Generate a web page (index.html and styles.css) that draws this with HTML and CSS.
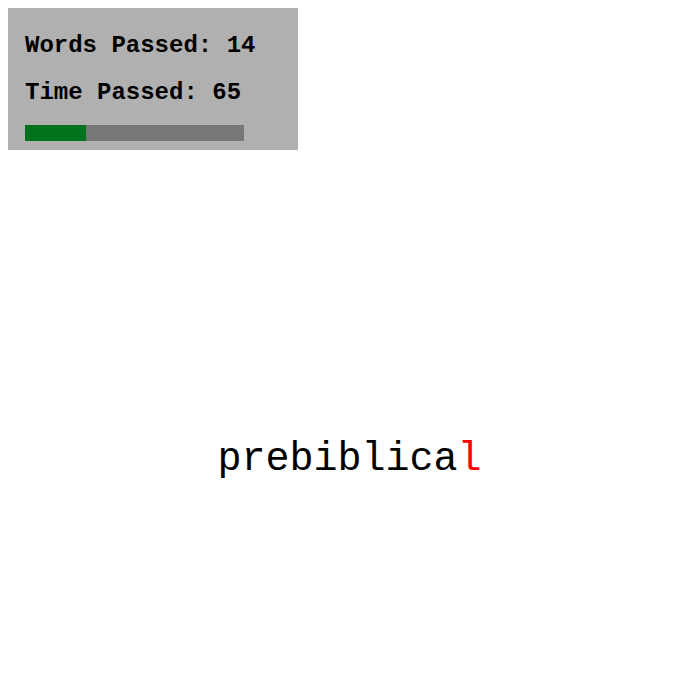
FILE: index.html
```html
<!DOCTYPE html>
<html>
<head>
<meta charset="utf-8">
<link rel="stylesheet" href="styles.css">
</head>
<body>
<div class="panel">
  <p class="stat">Words Passed: 14</p>
  <p class="stat second">Time Passed: 65</p>
  <div class="bar"><div class="fill" style="width: 28%"></div></div>
</div>
<div class="word"><span class="done">prebiblica</span><span class="next">l</span></div>
</body>
</html>
```

FILE: styles.css
```css
html, body {
  margin: 0;
  padding: 0;
  background: #ffffff;
}
body {
  padding: 8px;
  font-family: "Liberation Mono", "Courier New", monospace;
}
.panel {
  width: 273px;
  padding: 24px 0 9px 17px;
  background: #b0b0b0;
}
.stat {
  margin: 0;
  font-size: 24px;
  line-height: 28px;
  font-weight: bold;
  color: #000;
  white-space: nowrap;
}
.stat.second {
  margin-top: 19px;
}
.bar {
  margin-top: 18px;
  width: 219px;
  height: 16px;
  background: #777777;
}
.fill {
  height: 100%;
  background: #00731c;
}
.word {
  margin-top: 287px;
  text-align: center;
  font-size: 40px;
  line-height: 46px;
  color: #000;
}
.next {
  color: #ff0000;
}
```
